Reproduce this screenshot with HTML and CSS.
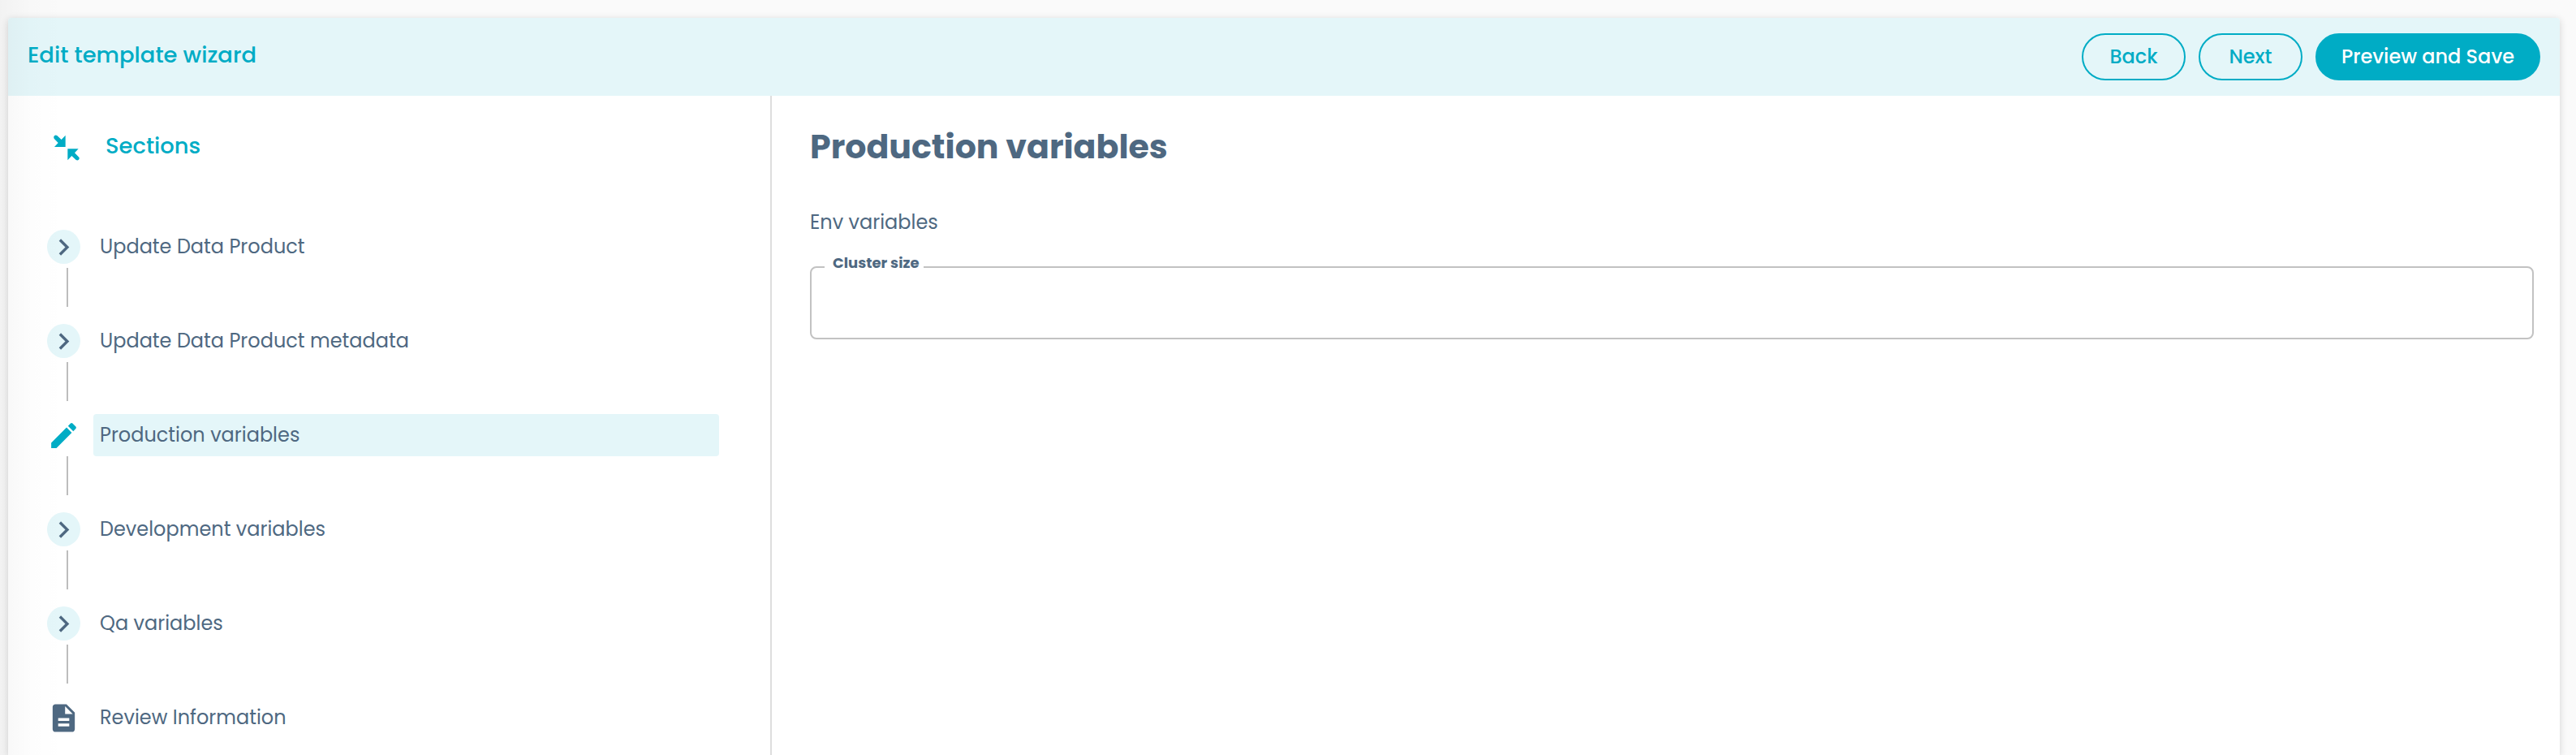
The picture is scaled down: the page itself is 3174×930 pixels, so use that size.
FILE: index.html
```html
<!DOCTYPE html>
<html lang="en">
<head>
<meta charset="utf-8">
<title>Edit template wizard</title>
<link rel="stylesheet" href="styles.css">
</head>
<body>
<main class="wizard">
  <header class="wizard-header">
    <h1 class="wizard-title">Edit template wizard</h1>
    <div class="actions">
      <button class="btn">Back</button>
      <button class="btn">Next</button>
      <button class="btn btn-save">Preview and Save</button>
    </div>
  </header>
  <div class="wizard-body">
    <nav class="sidebar">
      <div class="sections">
        <svg class="collapse" viewBox="48 48 96 96"><path d="M92 50V93H51L65 78 50 62Q47 56 51 52 55 48 61 51L77 66z"/><path d="M100 100H140L126 115 142 131Q145 136 141 140 137 144 131 141L115 126 100 142z"/></svg>
        <span class="sections-title">Sections</span>
      </div>
      <ul class="steps">
        <li class="step"><span class="mark round"><svg viewBox="0 0 24 24"><path d="M10 6 8.59 7.41 13.17 12l-4.58 4.59L10 18l6-6z"/></svg></span><span class="label">Update Data Product</span></li>
        <li class="step"><span class="mark round"><svg viewBox="0 0 24 24"><path d="M10 6 8.59 7.41 13.17 12l-4.58 4.59L10 18l6-6z"/></svg></span><span class="label">Update Data Product metadata</span></li>
        <li class="step active"><span class="mark"><svg viewBox="0 0 24 24"><path d="M3 17.25V21h3.75L17.81 9.94l-3.75-3.75zM20.71 7.04c.39-.39.39-1.02 0-1.41l-2.34-2.34a.996.996 0 0 0-1.41 0l-1.83 1.83 3.75 3.75z"/></svg></span><span class="label">Production variables</span></li>
        <li class="step"><span class="mark round"><svg viewBox="0 0 24 24"><path d="M10 6 8.59 7.41 13.17 12l-4.58 4.59L10 18l6-6z"/></svg></span><span class="label">Development variables</span></li>
        <li class="step"><span class="mark round"><svg viewBox="0 0 24 24"><path d="M10 6 8.59 7.41 13.17 12l-4.58 4.59L10 18l6-6z"/></svg></span><span class="label">Qa variables</span></li>
        <li class="step"><span class="mark"><svg viewBox="0 0 24 24"><path d="M14 2H6c-1.1 0-1.99.9-1.99 2L4 20c0 1.1.89 2 1.99 2H18c1.1 0 2-.9 2-2V8zm2 16H8v-2h8zm0-4H8v-2h8zm-3-5V3.5L18.5 9z"/></svg></span><span class="label">Review Information</span></li>
      </ul>
    </nav>
    <section class="content">
      <h2 class="heading">Production variables</h2>
      <p class="group">Env variables</p>
      <div class="field"><label class="field-label" for="cluster">Cluster size</label><input id="cluster" class="field-input"></div>
    </section>
  </div>
</main>
<div class="edge-shade"></div>
</body>
</html>
```
FILE: styles.css
```css
* { box-sizing: border-box; }
body {
  margin: 0;
  height: 930px;
  overflow: hidden;
  padding: 22px 20px 0 10px;
  background: #fafafa;
  color: #4e6881;
  font-family: Poppins, Inter, "Open Sans", sans-serif;
}
h1, h2, p, ul { margin: 0; padding: 0; font-weight: 400; }
.wizard {
  height: 908px;
  display: flex;
  flex-direction: column;
  background: #fff;
  border-radius: 4px 4px 0 0;
  box-shadow: 0 2px 10px rgba(0, 0, 0, .16);
}
.wizard-header {
  height: 96px;
  flex: none;
  display: flex;
  justify-content: space-between;
  padding: 19px 24px 0 24px;
  background: #e4f6f9;
  border-radius: 4px 4px 0 0;
  color: #00acc5;
}
.wizard-title { font-size: 27.4px; font-weight: 500; line-height: 54px; }
.actions { display: flex; gap: 16px; }
.btn {
  height: 58px;
  width: 128px;
  padding: 0;
  border: 2px solid #00acc5;
  border-radius: 29px;
  background: transparent;
  color: #00acc5;
  font: 500 24px/54px Poppins, Inter, "Open Sans", sans-serif;
}
.btn-save { width: 277px; background: #00acc5; color: #fff; }
.wizard-body { flex: 1; min-height: 0; display: flex; }
.sidebar { width: 941px; flex: none; border-right: 2px solid #dedede; padding: 37px 63px 0 48px; }
.sections { display: flex; align-items: center; height: 50px; padding-left: 8px; gap: 32px; color: #00acc5; font-size: 27.4px; font-weight: 500; }
.sections-title { line-height: 49px; height: 50px; }
.collapse { width: 32px; height: 32px; margin-top: 4px; fill: currentColor; }
.steps { list-style: none; padding-top: 73px; }
.step { height: 116px; display: grid; grid-template-columns: 41px 771px; column-gap: 16px; grid-template-rows: 52px 48px; font-size: 24px; }
.step:last-child { height: 52px; grid-template-rows: 52px; }
.step:not(:last-child)::after { content: ""; width: 2px; height: 48px; background: #bdbdbd; margin-left: 24px; }
.mark { width: 41px; height: 42px; margin-top: 5px; border-radius: 50%; display: flex; align-items: center; justify-content: center; }
.mark svg { width: 41px; height: 41px; flex: none; fill: #4e6881; }
.round { background: #e4f6f9; }
.active .mark svg { fill: #00acc5; }
.label { height: 52px; line-height: 51px; padding-left: 8px; border-radius: 4px; white-space: nowrap; }
.active .label { background: #e4f6f9; }
.content { flex: 1; padding: 38px 32px 0 47px; }
.heading { font-size: 41.1px; font-weight: 700; line-height: 50px; }
.group { font-size: 24px; line-height: 36px; margin-top: 50px; }
.field { height: 90px; margin-top: 36px; border: 2px solid #c2c2c2; border-radius: 8px; position: relative; }
.field-label { position: absolute; left: 16px; top: -18px; width: 122px; height: 24px; line-height: 24px; padding-left: 10px; background: #fff; font-size: 18px; font-weight: 700; white-space: nowrap; }
.field-input { display: block; width: 100%; height: 100%; border: 0; background: transparent; outline: 0; }
.edge-shade { position: absolute; left: 0; top: 0; width: 80px; height: 930px; background: linear-gradient(90deg, rgba(0, 0, 0, .03), rgba(0, 0, 0, .008) 50%, rgba(0, 0, 0, 0)); pointer-events: none; }
```
